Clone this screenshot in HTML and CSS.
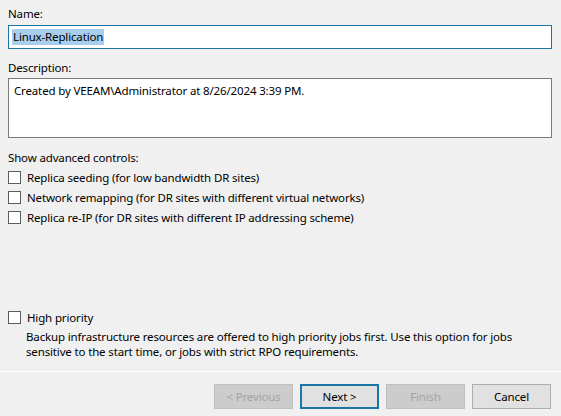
FILE: index.html
```html
<!DOCTYPE html>
<html>
<head>
<meta charset="utf-8">
<link rel="stylesheet" href="styles.css">
</head>
<body>
<div class="page">
  <div class="form">
    <div class="label label-name">Name:</div>
    <div class="field field-name"><span class="sel">Linux-Replication</span></div>
    <div class="label label-desc">Description:</div>
    <div class="field field-desc">Created by VEEAM\Administrator at 8/26/2024 3:39 PM.</div>
    <div class="label label-adv">Show advanced controls:</div>
    <div class="checks">
      <div class="check"><span class="box"></span><span>Replica seeding (for low bandwidth DR sites)</span></div>
      <div class="check"><span class="box"></span><span>Network remapping (for DR sites with different virtual networks)</span></div>
      <div class="check"><span class="box"></span><span>Replica re-IP (for DR sites with different IP addressing scheme)</span></div>
    </div>
    <div class="priority">
      <div class="check"><span class="box"></span><span>High priority</span></div>
      <div class="hint">Backup infrastructure resources are offered to high priority jobs first. Use this option for jobs sensitive to the start time, or jobs with strict RPO requirements.</div>
    </div>
  </div>
  <div class="footer">
    <div class="btn disabled">&lt; Previous</div>
    <div class="btn default">Next &gt;</div>
    <div class="btn disabled">Finish</div>
    <div class="btn">Cancel</div>
  </div>
</div>
</body>
</html>
```
FILE: styles.css
```css
html, body {
  margin: 0;
  padding: 0;
  background: #f0f0f0;
}
body {
  font-family: "Noto Sans", "Open Sans", sans-serif;
  font-size: 11.5px;
  letter-spacing: -0.15px;
  color: #000;
}
.page {
  width: 561px;
  height: 416px;
  display: flex;
  flex-direction: column;
  overflow: hidden;
}
.form {
  padding: 6px 9px 0 8px;
  height: 371px;
  box-sizing: border-box;
}
.label {
  line-height: 16px;
  height: 16px;
}
.label-name { margin-bottom: 3px; }
.field {
  background: #fff;
  box-sizing: border-box;
  line-height: 16px;
}
.field-name {
  height: 24px;
  border: 1px solid #1a76a6;
  padding: 3px 4px;
}
.sel {
  background: #a9cdec;
  display: inline-block;
  padding: 0 1px;
  margin-left: -1px;
}
.label-desc { margin-top: 11px; margin-bottom: 2px; }
.field-desc {
  height: 60px;
  border: 1px solid #7a7a7a;
  padding: 4px 5px;
}
.label-adv { margin-top: 12px; margin-bottom: 1px; }
.check {
  height: 20px;
  display: flex;
  align-items: center;
  gap: 6px;
}
.box {
  width: 13px;
  height: 13px;
  box-sizing: border-box;
  border: 1px solid #5c5c5c;
  background: #fff;
  flex: none;
}
.priority {
  margin-top: 80px;
}
.hint {
  padding-left: 18px;
  line-height: 15px;
  margin-top: 2px;
  padding-right: 10px;
}
.footer {
  border-top: 1px solid #fff;
  flex: 1;
  display: flex;
  justify-content: flex-end;
  align-items: flex-start;
  gap: 7px;
  padding: 12px 10px 0 0;
}
.btn {
  width: 79px;
  height: 25px;
  box-sizing: border-box;
  border: 1px solid #adadad;
  background: #e1e1e1;
  display: flex;
  align-items: center;
  justify-content: center;
}
.btn.disabled {
  background: #cccccc;
  border-color: #bfbfbf;
  color: #a3a3a3;
}
.btn.default {
  border: 2px solid #1a76a6;
}
```
